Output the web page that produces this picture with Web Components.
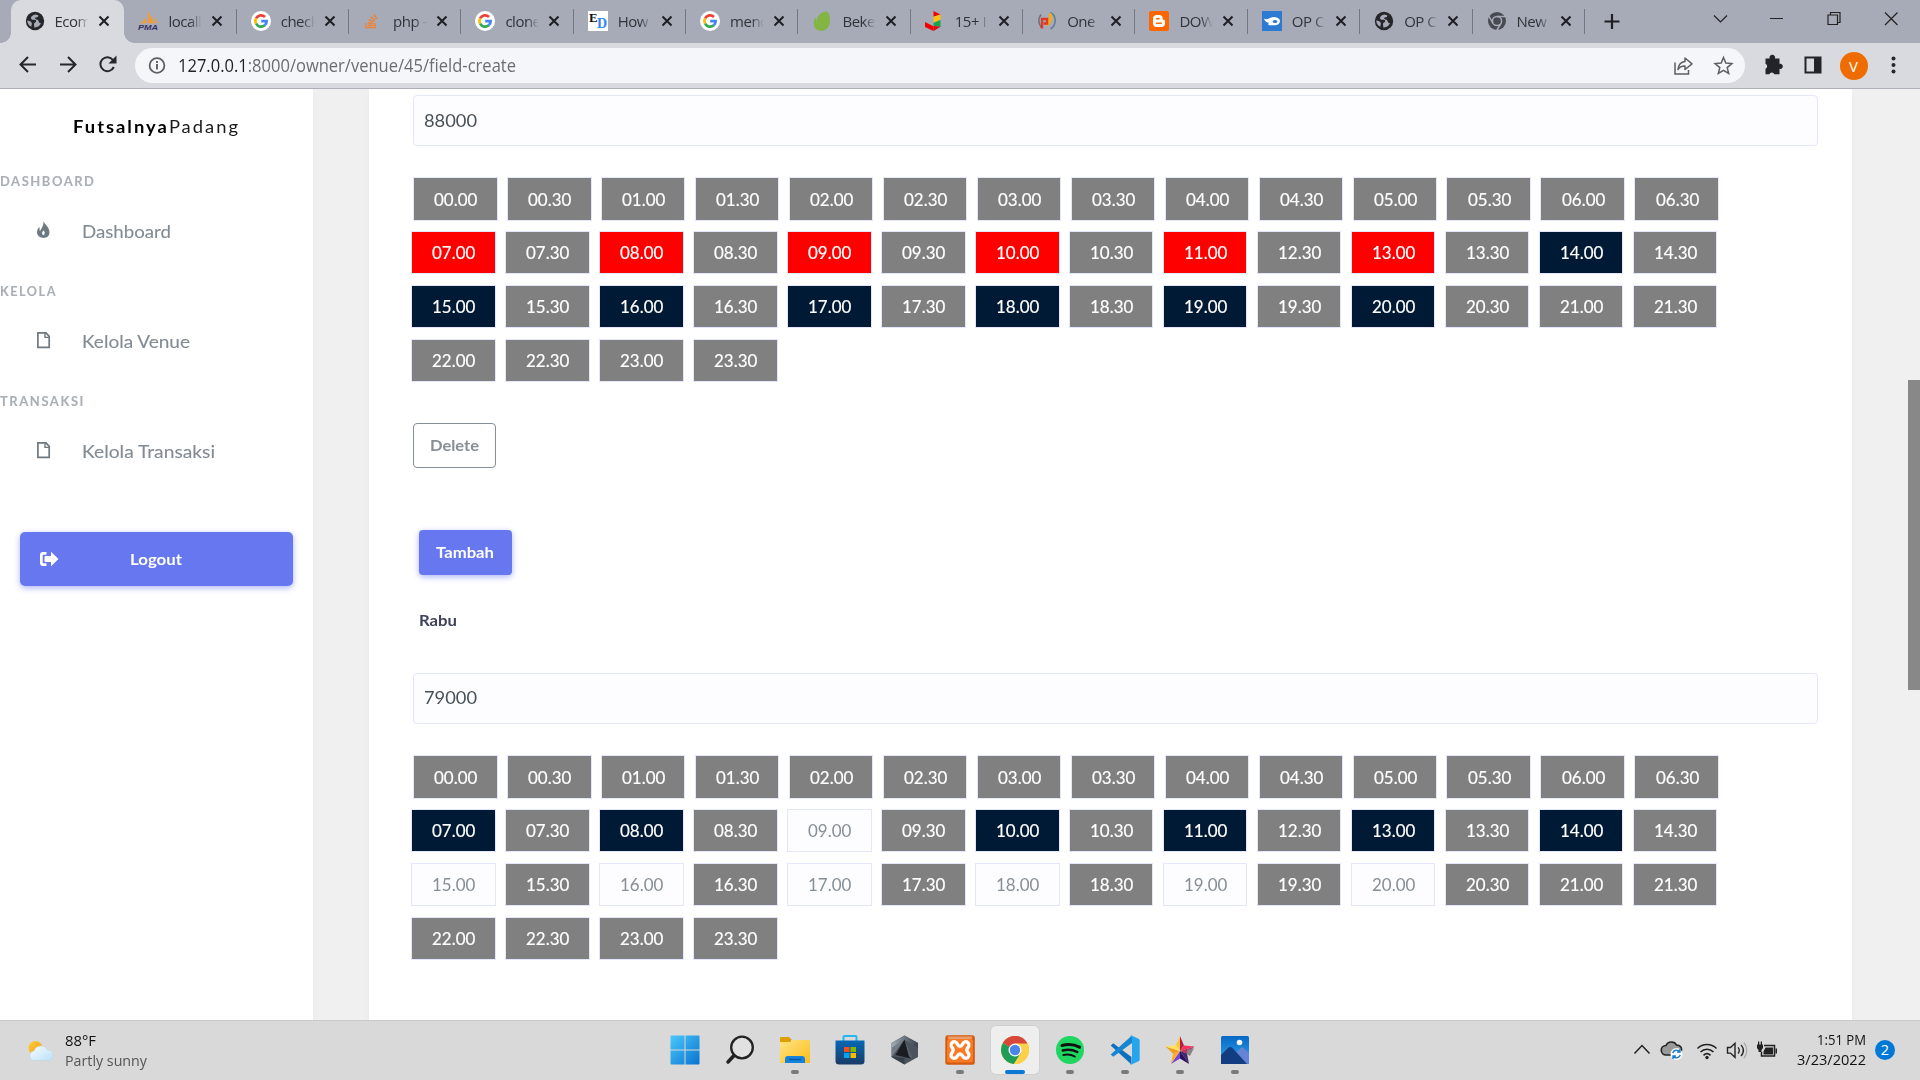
<!DOCTYPE html>
<html lang="id">
<head>
<meta charset="utf-8">
<title>FutsalnyaPadang</title>
<style>
body{margin:0;width:1920px;height:1080px;overflow:hidden;display:flex;flex-direction:column;background:#f0f0f0;font-family:Lato,"Open Sans",sans-serif}
main{flex:1;min-height:0;display:flex;overflow:hidden}
</style>
</head>
<body>
<browser-chrome></browser-chrome>
<main>
  <side-nav></side-nav>
  <schedule-card></schedule-card>
  <page-scrollbar></page-scrollbar>
</main>
<task-bar></task-bar>
<script>
const make=(name,html,after)=>customElements.define(name,class extends HTMLElement{
  connectedCallback(){
    if(this.shadowRoot)return;
    const root=this.attachShadow({mode:'open'});
    root.innerHTML=typeof html==='function'?html(this):html;
    if(after)after(this,root);
  }
});
const svg=(w,h,body,extra='')=>`<svg width="${w}" height="${h}" viewBox="0 0 ${w} ${h}" ${extra}>${body}</svg>`;

const globe=svg(20,20,'<circle cx="10" cy="10" r="9.2" fill="#24262a"/><path d="M10.5 3.600C7.600 4 5.800 5.600 6 7.400c.3 1.300 1.800 1.300 3.400 1.300 1.700 0 2 .9 1.600 2.100-.4 1-1.800.8-2 2-.2 1.400.6 2.300.2 3.600 3.300.3 5.700-1.300 6.900-4.300-1.500.2-2.300-.5-2.500-1.800-.2-1.500-1.900-1.400-3.100-2.200-.9-.7-.2-1.700 1.100-1.800 1.300 0 1.900-.9 1.600-2.100z" fill="#a7abb7"/><path d="M2.200 9.500c2 .3 4.200 1 4.600 2.700.3 1.300-.6 2-.5 3.600-2.500-1.300-4-3.400-4.100-6.300z" fill="#a7abb7"/>');
const google=svg(20,20,'<circle cx="10" cy="10" r="10" fill="#fff"/><g fill="none" stroke-width="2.700"><path d="M5.100 7.300A5.600 5.600 0 0 1 14 6" stroke="#ea4335"/><path d="M5.100 7.300a5.600 5.600 0 0 0 0 5.400" stroke="#fbbc05"/><path d="M5.100 12.700a5.600 5.600 0 0 0 8.700 1.500" stroke="#34a853"/><path d="M10.200 10.200h5.400a5.500 5.500 0 0 1-1.900 4.100" stroke="#4285f4"/></g>');
const fav={
 globe,google,
 pma:svg(20,20,'<path d="M8.200.8C9 5 8 9 2 12.300h6zM9.500 0c1.300 4.500 1.200 8.500.2 12.300h6C14.300 8 12.500 3.800 9.500 0zM15.300 5.400c1.400 2.300 2 4.700 1.700 6.900h2.300c-.5-3-1.700-5.200-4-6.900z" fill="#f79a2e"/><text x="0" y="19" font-family="Liberation Sans" font-size="8" font-weight="bold" font-style="italic" fill="#333264" textLength="20" lengthAdjust="spacingAndGlyphs">PMA</text>'),
 so:svg(20,20,'<g fill="none" stroke="#ef8236" stroke-width="1.500"><path d="M3 12v4.500h9V12M5 14.300h5.200M5 11.800l5.300.8M5.800 8.800l5 2M7.800 5.800l4.200 3.500M11 3.500l2.800 4.700"/></g>'),
 ed:svg(20,20,'<path fill="#fff" d="M0 0h20v20H0z"/><text x="1" y="11" font-family="Liberation Serif" font-size="13" font-weight="bold" fill="#111">E</text><text x="9" y="16.500" font-family="Liberation Serif" font-size="14" font-weight="bold" fill="#2f87f5">D</text>'),
 leaf:svg(20,20,'<path d="M14.800.3c3 2.500 4 8 2.600 13.200-1.200 4-4.300 6.500-8.200 6.300C3.600 19.500.8 15 2.100 9.400c.4-1.800 1.300-2.700 1.900-2.300.5.300-.4 3.500.3 5.900C4 5.500 9 1 14.800.300z" fill="#82b541"/>'),
 blocks:svg(20,20,'<path fill="#f30000" d="M8.500 0l7 3.500-7 2.300zM0 11l8.500 4.200V20L0 16z"/><path fill="#ffc20e" d="M8.500 5.800l7-2.300v5.200l-7 3z"/><path fill="#16a34a" d="M8.500 11.700L15.500 9v7l-7-1z"/><path fill="#e30613" d="M8.500 15l7 .8-7 4.200z"/>'),
 one:svg(20,20,'<path d="M4 3.500c-3 4-2.500 9 .3 13" stroke="#6b7078" stroke-width="1.500" fill="none"/><path d="M13.500 1.500c6 3 6.500 12 0 16.500" stroke="#5c8190" stroke-width="1.600" fill="none"/><path d="M13 2.500c1.500 4 1.200 8.500-4.500 11.500" stroke="#f7a81b" stroke-width="3.200" fill="none"/><path d="M5 17.500V8h5v4.500H6.500" stroke="#df3b24" stroke-width="2.400" fill="none"/>'),
 blogger:svg(20,20,'<rect width="20" height="20" rx="2" fill="#ff6600"/><path d="M4 7.500C4 5.300 5.500 4 7.500 4h2.700c2.200 0 3.500 1.500 3.500 3.500 0 1.200.5 1.300 1.300 1.400.7.100 1 .5 1 1.100v2.500c0 2.200-1.500 3.500-3.500 3.500h-5C5.500 16 4 14.500 4 12.500z" fill="#fff"/><path d="M7.500 7.800h2.600M7.500 12.200h4.800" stroke="#ff6600" stroke-width="1.500" stroke-linecap="round"/>'),
 op:svg(20,20,'<path fill="#2c7ad1" d="M0 0h20v20H0z"/><path d="M2 7.800c2.500 1 4.500.3 6.500-1 3-1.700 7.500-1 9 1.700 1.500 3-.8 5.800-4.500 5.800H8c-2 0-2.200-2-.8-2.600C5 11.700 2.800 10.300 2 7.800z" fill="#fff"/><ellipse cx="13" cy="10.500" rx="2.400" ry="1.500" fill="#2c7ad1"/>'),
 chrome:svg(20,20,'<circle cx="10" cy="10" r="9" fill="#474a50"/><circle cx="10" cy="10" r="4.600" fill="none" stroke="#a7abb7" stroke-width="1.500"/><path d="M10 5.400h8.500M6 12.300L1.800 5M14 12.300L9.700 19.500" stroke="#a7abb7" stroke-width="1.500"/>')
};

make('browser-tab',el=>`<style>
:host{display:block;width:112.350px;height:43px;flex:none;box-sizing:border-box}
.t{display:flex;align-items:center;height:42px;padding:0 0 1px 14px;position:relative}
.i{width:20px;height:20px;margin-right:10px;flex:none}
.x{width:36px;overflow:hidden;white-space:nowrap;font:15px/22px "Open Sans",sans-serif;letter-spacing:-.5px;color:#30333a;margin:-1px 7px 0 0;-webkit-mask:linear-gradient(90deg,#000 60%,transparent 94%)}
.s{position:absolute;right:0;top:9px;width:1px;height:25px;background:#74777f}
svg{display:block}
:host([active]){width:113.900px}
:host([active]) .t{background:#d9dae0;border-radius:10px 10px 0 0}
:host([active]) .t:before,:host([active]) .t:after{content:"";position:absolute;bottom:0;width:10px;height:10px}
:host([active]) .t:before{left:-10px;background:radial-gradient(circle at 0 0,transparent 9.5px,#d9dae0 10px)}
:host([active]) .t:after{right:-10px;background:radial-gradient(circle at 100% 0,transparent 9.5px,#d9dae0 10px)}
:host([active]) .s,:host([nosep]) .s{display:none}
</style><div class="t"><span class="i">${fav[el.getAttribute('icon')]}</span><span class="x"><slot></slot></span>${svg(12,12,'<path d="M1.500 1.500l9 9M10.500 1.500l-9 9" stroke="#1d1f23" stroke-width="2"/>')}<i class="s"></i></div>`);

make('browser-chrome',`<style>
:host{display:block;flex:none;height:89px;background:#d9dae0;box-sizing:border-box;border-bottom:1px solid #aeafb6}
.tabs{display:flex;height:43px;background:#a7abb7;padding-left:10.500px}
.tabs>svg{flex:none}
.bar{display:flex;height:45px;align-items:center}
.nav{width:135px;display:flex}
.omni{width:1609.500px;height:35px;border-radius:18px;background:#f5f6f9;display:flex;align-items:center;box-sizing:border-box}
.omni fit-text{font:17.800px/24px "Open Sans",sans-serif;color:#6a6d72;margin:-1px auto 0 6px}
b{font-weight:400;color:#1f2125}
svg{display:block}
.av{width:28px;height:28px;border-radius:50%;background:#ef6c00;color:#fff;font:15px/28px "Open Sans",sans-serif;text-align:center}
</style>
<div class="tabs">
<browser-tab active icon="globe">Ecom</browser-tab><browser-tab icon="pma">locall</browser-tab><browser-tab icon="google">check</browser-tab><browser-tab icon="so">php -</browser-tab><browser-tab icon="google">clone</browser-tab><browser-tab icon="ed">How</browser-tab><browser-tab icon="google">mend</browser-tab><browser-tab icon="leaf">Beke</browser-tab><browser-tab icon="blocks">15+ I</browser-tab><browser-tab icon="one">One</browser-tab><browser-tab icon="blogger">DOW</browser-tab><browser-tab icon="op">OP C</browser-tab><browser-tab icon="globe">OP C</browser-tab><browser-tab icon="chrome">New</browser-tab>
${svg(330,43,'<path d="M19.500 21.500h15M27 14v15" stroke="#1d1f23" stroke-width="2.200"/><g fill="none" stroke="#222" stroke-width="1.200"><path d="M129 15.500l6.500 6.500 6.500-6.500M185 18.500h13M243 15h9.500v9.500H243zM245.500 15v-2.500h9.500v10h-2.500M300 12.500l12.500 12.500M312.500 12.500L300 25"/></g>')}
</div>
<div class="bar"><div class="nav">${svg(135,45,'<g fill="none" stroke="#25272b" stroke-width="2"><path d="M36 21.500H21M28 14l-7.500 7.500L28 29M60 21.500h15M68 14l7.500 7.500L68 29"/><path d="M113 17a7 7 0 1 0 .8 7"/></g><path d="M116.500 12.500v8h-8z" fill="#25272b"/>')}</div>
<div class="omni">${svg(37,35,'<circle cx="22" cy="17.500" r="7.400" fill="none" stroke="#5c5f64" stroke-width="1.800"/><path d="M22 16v5.500M22 13v2" stroke="#5c5f64" stroke-width="1.900"/>')}
<fit-text w="338"><b>127.0.0.1</b>:8000/owner/venue/45/field-create</fit-text>
${svg(86,35,'<g fill="none" stroke="#5c5f64" stroke-width="1.500"><path d="M16 14.500v11.500h13.500v-4"/><path d="M26 10l7 5.800-7 5.700v-3.500c-3.500-.2-5.300.8-7 3.500.5-4.500 3-7.600 7-8z" stroke-linejoin="round"/><path d="M64.500 9.500l2.300 5.600 6.100.5-4.700 4 1.500 5.900-5.200-3.200-5.200 3.200 1.500-5.900-4.700-4 6.100-.5z"/></g>')}</div>
${svg(95,45,'<path d="M20.500 15.500h4.200a2.800 2.800 0 1 1 5.200 0h4.600v5.300a2.600 2.600 0 1 1 0 5v5.400h-5.200a2.700 2.700 0 0 0-5 0h-3.800v-5.500a2.700 2.700 0 0 0 0-5z" fill="#222429"/><path d="M60.500 14.500h15v15h-15z" fill="none" stroke="#222429" stroke-width="2"/><path d="M69 14h6v16h-6z" fill="#222429"/>')}
<div class="av">V</div>
${svg(50,45,'<g fill="#25272b"><circle cx="25.500" cy="15.500" r="2"/><circle cx="25.500" cy="22" r="2"/><circle cx="25.500" cy="28.500" r="2"/></g>')}
</div>`);

make('nav-group',el=>`<style>
:host{display:block;height:110px}
.h{height:20px;font:700 12.300px/20px Lato,sans-serif;letter-spacing:1.500px;color:#a9afb5}
.r{display:flex;align-items:center;height:60px;margin-top:10px;color:#828b93;font:16.800px/24px Lato,sans-serif}
.i{width:47px;padding-left:35px;margin-right:-.3px;margin-top:-5px}
svg{display:block}
fit-text{-webkit-text-stroke:.1px}
</style><div class="h"><fit-text w="${el.getAttribute('hw')}">${el.getAttribute('head')}</fit-text></div>
<div class="r"><span class="i">${el.getAttribute('icon')==='fire'
 ?svg(17,18,'<path d="M8.500 0C9.600 3.300 14.500 6 14.500 11.300 14.500 15 12 17 8.600 17S2 14.800 2 11.300c0-2.700 1.500-4.700 2.600-5.200 0 2-.3 3.100.4 3.800C6.800 7 8.800 4.300 8.500 0z" fill="#6f7981"/><path d="M8.300 9.500c2 1.200 1.800 3.500.2 4.800-1.800-.8-2-3-.2-4.800z" fill="#fff"/>')
 :svg(17,18,'<path d="M2.900 1.900h8.100l3.200 3.400v11H2.900z" fill="none" stroke="#6f7981" stroke-width="1.700"/><path d="M10 2v4.400h4.400" fill="none" stroke="#6f7981" stroke-width="1.400"/>')}</span><fit-text w="${el.getAttribute('w')}"><slot></slot></fit-text></div>`);

make('side-nav',`<style>
:host{display:block;width:313px;flex:none;background:#fff;box-shadow:0 4px 8px rgba(0,0,0,.03);position:relative}
.brand{height:74px;padding-left:72.500px;font:16.500px/76px Lato,sans-serif;letter-spacing:1.800px;color:#191919;box-sizing:border-box;margin-bottom:9px}
.brand b{font-weight:700;color:#000}
.out{margin:30px 20px 0;height:54px;border-radius:5px;background:#6777ef;box-shadow:0 2px 6px #acb5f6;color:#fff;display:flex;align-items:center;font:700 14.500px/24px Lato,sans-serif}
.out svg{margin:0 71px 0 19px}
.out fit-text{padding-top:1px}
</style><div class="brand"><fit-text w="167">
<b>Futsalnya</b>Padang</fit-text></div>
<nav-group head="DASHBOARD" hw="95.500" icon="fire" w="89">Dashboard</nav-group>
<nav-group head="KELOLA" hw="57" icon="file" w="108">Kelola Venue</nav-group>
<nav-group head="TRANSAKSI" hw="85" icon="file" w="133">Kelola Transaksi</nav-group>
<div class="out">${svg(20,16,'<path d="M7.500 1H4a3 3 0 0 0-3 3v8a3 3 0 0 0 3 3h3.500v-2.700H4.500a.8.8 0 0 1-.8-.8v-7a.8.8 0 0 1 .8-.8h3z" fill="#fff"/><path d="M12 .8L19.500 8 12 15.200V11H6.500a1 1 0 0 1-1-1V6a1 1 0 0 1 1-1H12z" fill="#fff"/>')}<fit-text w="52">Logout</fit-text></div>`);

make('time-slot',`<style>
:host{display:flex;box-sizing:border-box;width:84.600px;height:43.400px;border:1px solid #e4e6fc;background:gray;color:#fff;align-items:center;justify-content:center;font:16.300px/24px Lato,sans-serif;padding:1.500px 0 0 1px}
:host([kind=booked]){background:red}
:host([kind=on]){background:#001a35}
:host([kind=free]){background:#fdfdff;color:#868e96}
fit-text{-webkit-text-stroke:.15px}
:host([kind=free]) fit-text{-webkit-text-stroke:0}
</style><fit-text w="43.300"><slot></slot></fit-text>`);

make('time-grid',`<style>
:host{display:flex;flex-direction:column;gap:10.400px;height:205px}
.r{display:flex;gap:9.370px}
.r:first-of-type{margin-left:1.800px}
</style>`,(el,root)=>{
  const hours=[...Array(24).keys()].flatMap(h=>{const p=String(h).padStart(2,'0');return [p+'.00',p+'.30'];}).filter(t=>!['11.30','12.00'].includes(t));
  const pick=a=>(el.getAttribute(a)||'').split(' ');
  const booked=pick('booked'),on=pick('on'),free=pick('free');
  for(let i=0;i<hours.length;i+=14){
    const r=document.createElement('div');r.className='r';
    hours.slice(i,i+14).forEach(t=>{
      const s=document.createElement('time-slot'),k=t.slice(0,2);
      s.textContent=t;
      if(t.endsWith('.00'))s.setAttribute('kind',booked.includes(k)?'booked':on.includes(k)?'on':free.includes(k)?'free':'closed');
      r.append(s);
    });
    root.append(r);
  }
});

make('price-field',`<style>
:host{display:flex;align-items:center;box-sizing:border-box;width:1405px;height:51px;margin-left:2px;border:1px solid #e4e6fc;border-radius:4px;background:#fdfdff;padding:0 10px;color:#495057;font:17px/24px Lato,sans-serif}
</style><fit-text w="53"><slot></slot></fit-text>`);

make('app-button',el=>`<style>
:host{display:flex;box-sizing:border-box;height:45px;border-radius:4px;align-items:center;justify-content:center;font:700 14.500px/24px Lato,sans-serif;padding-top:1px}
:host([kind=outline]){width:83px;border:1px solid #868e96;color:#868e96}
:host([kind=primary]){width:93px;background:#6777ef;color:#fff;box-shadow:0 2px 6px #acb5f6}
</style><fit-text w="${el.getAttribute('w')}"><slot></slot></fit-text>`);

make('schedule-card',`<style>
:host{display:block;box-sizing:border-box;width:1483px;margin-left:56px;flex:none;background:#fff;padding:6px 0 0 42.200px;box-shadow:0 4px 8px rgba(0,0,0,.03)}
time-grid{margin-top:31.200px}
.d{margin:40.800px 0 0 1.800px}
.t{margin:62px 0 0 7.800px}
.day{margin:33px 0 41px 7.500px;height:24px;font:700 14.600px/25px Lato,sans-serif;color:#3f4358}
</style>
<price-field>88000</price-field>
<time-grid booked="07 08 09 10 11 13" on="14 15 16 17 18 19 20"></time-grid>
<app-button class="d" kind="outline" w="49">Delete</app-button>
<app-button class="t" kind="primary" w="58">Tambah</app-button>
<div class="day"><fit-text w="38">Rabu</fit-text></div>
<price-field>79000</price-field>
<time-grid on="07 08 10 11 13 14" free="09 15 16 17 18 19 20"></time-grid>`);

make('page-scrollbar',`<style>:host{display:block;width:12px;margin-left:auto;padding-top:291px}i{display:block;height:310px;background:#888}</style><i></i>`);

const app={
 win:svg(30,30,'<defs><linearGradient id="a" x2="1" y2="1"><stop stop-color="#4cc8fb"/><stop offset="1" stop-color="#0873d0"/></linearGradient></defs><path d="M1.500.5H14.500V14.500H.5V1.500a1 1 0 0 1 1-1zM15.500.5h13a1 1 0 0 1 1 1v13h-14zM.5 15.500h14v14h-13a1 1 0 0 1-1-1zM15.500 15.500h14v13a1 1 0 0 1-1 1h-13z" fill="url(#a)"/>'),
 search:svg(30,30,'<circle cx="17" cy="12.500" r="10.800" fill="#e9e9e9" fill-opacity=".5" stroke="#222" stroke-width="2.300"/><path d="M9 20.500L3 27" stroke="#222" stroke-width="3.500" stroke-linecap="round"/>'),
 folder:svg(30,30,'<defs><linearGradient id="a" x2="1" y2="1"><stop stop-color="#ffe484"/><stop offset="1" stop-color="#fcbd19"/></linearGradient></defs><path d="M0 3a1 1 0 0 1 1-1h8l3 3h-1v4H0z" fill="#dda000"/><path d="M0 7h10l3-2h16a1 1 0 0 1 1 1v22H0z" fill="url(#a)"/><path d="M5 28v-4a3 3 0 0 1 3-3h14a3 3 0 0 1 3 3v4z" fill="#1583dc"/><path d="M9 24.500h12" stroke="#075ba6" stroke-width="1.500"/>'),
 store:svg(30,30,'<defs><linearGradient id="a" x2="0" y2="1"><stop stop-color="#0868b5"/><stop offset="1" stop-color="#193b67"/></linearGradient></defs><path d="M8.500 7V2a1 1 0 0 1 1-1h11a1 1 0 0 1 1 1v5" fill="none" stroke="#25b7ed" stroke-width="2"/><path d="M.5 5.500h29V26a3.500 3.500 0 0 1-3.500 3.500H4A3.500 3.500 0 0 1 .5 26z" fill="url(#a)"/><path fill="#f25022" d="M9 12h5.500v5H9z"/><path fill="#7fba00" d="M15.500 12H21v5h-5.500z"/><path fill="#00a4ef" d="M9 18h5.500v5H9z"/><path fill="#ffb900" d="M15.500 18H21v5h-5.500z"/>'),
 crate:svg(30,30,'<defs><linearGradient id="a" x2="1" y2="0"><stop stop-color="#a3abb3"/><stop offset=".5" stop-color="#6b747d"/><stop offset="1" stop-color="#3a424b"/></linearGradient></defs><path d="M14.500.5L28 8v14l-13.500 7.500L1.500 22V8z" fill="#4b545d"/><path d="M14.500.5L28 8v5L14.500 5 1.500 15V8z" fill="url(#a)"/><path d="M14.500 4.500L2 21.500v-9z" fill="#737d87"/><path d="M14.500 4.500L5.500 20l15 3.500z" fill="#191d22"/><path d="M14.500 4.500l8 18-3.500-.8z" fill="#59636d"/><path d="M1.500 21.500L14.500 23v6.500L1.500 22z" fill="#363e47"/>'),
 xampp:svg(30,30,'<rect x=".3" y=".3" width="29.500" height="29.500" rx="2.500" fill="#d45b12"/><rect x="2" y="4" width="26" height="23.500" rx="2" fill="#fb7a24"/><path d="M2.500 1.500h25l-1 2.500h-23z" fill="#e9a06e"/><path d="M10.500 7c-2.500-.8-5 1-4.300 3.700.5 2 2 2.500 2 4.300s-1.500 2.300-2 4.300c-.7 2.700 1.800 4.500 4.300 3.700 2.200-.8 2-4 4.500-4s2.300 3.200 4.500 4c2.500.8 5-1 4.300-3.700-.5-2-2-2.500-2-4.300s1.500-2.300 2-4.300C24.500 8 22 6.200 19.500 7c-2.200.8-2 4.500-4.500 4.500S12.700 7.800 10.500 7z" fill="none" stroke="#fff" stroke-width="3.400"/>'),
 chrome:svg(30,30,'<circle cx="15" cy="15" r="14" fill="#fcc934"/><path d="M15 15L2.900 8A14 14 0 0 1 27.100 8H15z" fill="#d9463a"/><path d="M15 15L2.900 8a14 14 0 0 0 11 21l7-11z" fill="#1f9d58"/><path d="M15 8.500h12.400A14 14 0 0 1 14 29l7-11z" fill="#fdd04a"/><path d="M2.900 8A14 14 0 0 1 27.400 8.600H15z" fill="#d9463a"/><circle cx="15" cy="15" r="6.500" fill="#fff"/><circle cx="15" cy="15" r="5.200" fill="#4b84ed"/>'),
 spotify:svg(30,30,'<circle cx="15" cy="15" r="14" fill="#1fd660"/><g fill="none" stroke="#111" stroke-linecap="round"><path d="M7 10.500c6-1.600 12-1.200 17.500 1.700" stroke-width="3"/><path d="M7.800 15.500c5-1.300 10-.8 14.500 1.500" stroke-width="2.500"/><path d="M8.300 20c4-1 8-.6 11.500 1.500" stroke-width="2"/></g>'),
 code:svg(30,30,'<path d="M.7 10.500l2.500-2.200L21.500 22v7.500z" fill="#0b70bd"/><path d="M.7 19.500l2.500 2.200L22 8V.5z" fill="#1486d2"/><path d="M21.500.5l7 3.300a2 2 0 0 1 1.200 1.800v18.800a2 2 0 0 1-1.200 1.800l-7 3.300a2 2 0 0 1-1.500-.6l2-1.400V2.500L20 1z" fill="#26a5ee"/>'),
 star:svg(30,30,'<path d="M15 1v15L11 10z" fill="#ffc83a"/><path d="M15 1l4 9.500L15 16z" fill="#b81b45"/><path d="M19 10.500l10.500 1L15 16z" fill="#f5315f"/><path d="M29.500 11.500L22 18.500 15 16z" fill="#bb3558"/><path d="M22 18.500l2 10.500-9-13z" fill="#412a6c"/><path d="M15 16l9 13-9-5.500z" fill="#29115a"/><path d="M15 16v7.500L6 29z" fill="#7341dd"/><path d="M15 16L6 29l2-10.500z" fill="#ffad24"/><path d="M15 16l-7 2.500L.5 11.500z" fill="#f29b1c"/><path d="M.5 11.500L11 10l4 6z" fill="#ffe15c"/><path d="M22 15l7-2-4 8-3-2z" fill="#8c8186"/>'),
 photo:svg(30,30,'<defs><linearGradient id="a" x2="0" y2="1"><stop stop-color="#0868c4"/><stop offset="1" stop-color="#2fa8f0"/></linearGradient></defs><rect x="1" y="1" width="28" height="28" rx="1.500" fill="url(#a)"/><path d="M14 19l8-7 7 6v11H14z" fill="#6684d6"/><path d="M1 20l7-7c1.500-1.400 3-1.400 4.500 0L27 29H1z" fill="#123d80"/><circle cx="19.500" cy="7.500" r="2.800" fill="#f4f6fa"/>')
};
make('task-icon',el=>`<style>
:host{display:flex;flex-direction:column;align-items:center;width:48px;height:48px;border-radius:5px;box-sizing:border-box;padding-top:9px}
:host([active]){background:#eeeeef;box-shadow:0 0 0 1px #d0d0d0}
svg{display:block}
i{display:block;width:8px;height:4px;border-radius:2px;margin-top:5px}
:host([open]) i{background:#7a7a7a}
:host([active]) i{width:20px;background:#0b78d6}
</style>${app[el.getAttribute('app')]}<i></i>`);

make('task-bar',`<style>
:host{display:flex;flex:none;height:60px;box-sizing:border-box;border-top:1px solid #c8cac9;background:#d9d9d9;font:14.600px/20px "Open Sans",sans-serif;color:#111}
svg{display:block}
.w{display:flex;width:661px;padding:9px 0 0 26px;box-sizing:border-box}
.w>div{display:flex;flex-direction:column;margin-left:8px}
.w .p{color:#555}
.apps{display:flex;gap:7px;padding-top:5px}
.apps task-icon{margin-top:0}
.tray{margin-left:auto;display:flex}
.tm{display:flex;flex-direction:column;align-items:flex-end;padding-top:8px;width:70px}
.n{width:20px;height:20px;margin:19px 25px 0 9px;border-radius:50%;background:#0078d7;color:#fff;text-align:center;font-size:14.500px;line-height:19px}
</style>
<div class="w">${svg(31,34,'<defs><linearGradient id="s" x2="1" y2="1"><stop stop-color="#ffcf35"/><stop offset="1" stop-color="#f79a1c"/></linearGradient><linearGradient id="c" x2="1" y2="1"><stop stop-color="#f7fcff"/><stop offset="1" stop-color="#b9e1f7"/></linearGradient></defs><circle cx="9.500" cy="18" r="7" fill="url(#s)"/><path d="M8 30.500a4.800 4.800 0 0 1 0-9.500 7.300 7.300 0 0 1 13.500-1 5.400 5.400 0 0 1 2 10.500z" fill="url(#c)" stroke="#bdd0da" stroke-width=".5"/>')}
<div><fit-text w="31">88°F</fit-text><fit-text class="p" w="82">Partly sunny</fit-text></div></div>
<div class="apps"><task-icon app="win"></task-icon><task-icon app="search"></task-icon><task-icon app="folder" open></task-icon><task-icon app="store"></task-icon><task-icon app="crate"></task-icon><task-icon app="xampp" open></task-icon><task-icon app="chrome" active></task-icon><task-icon app="spotify" open></task-icon><task-icon app="code" open></task-icon><task-icon app="star" open></task-icon><task-icon app="photo" open></task-icon></div>
<div class="tray">${svg(166,59,'<g transform="translate(0 -1)"><path d="M4.500 33.500L12 25.500l7.500 8" fill="none" stroke="#222" stroke-width="1.500"/><path d="M36 35a4.700 4.700 0 0 1 0-9.500c2-4.500 8.500-4.500 10.500-.5 4 .2 5.500 2.700 5 5.500L46 35z" fill="#999" stroke="#222" stroke-width="1.600"/><circle cx="46.500" cy="34" r="6" fill="#fff"/><path d="M42.700 33a4 4 0 0 1 7-1.300M50.300 35a4 4 0 0 1-7 1.300M50 29v3h-3M43 39v-3h3" fill="none" stroke="#1379d4" stroke-width="1.400"/><g fill="none" stroke="#222" stroke-width="1.600"><path d="M67.500 28.500c5.400-5.300 13.600-5.300 19 0M70.500 32c3.800-3.700 9.200-3.700 13 0M73.500 35.300c2.200-2 4.800-2 7 0"/><path d="M97.500 27.500h3l4.500-4.200v14l-4.500-4.200h-3z" stroke-width="1.400"/><path d="M108 27.300c1.700 2 1.700 4.200 0 6.200M111 24.800c3 3.500 3 7.700 0 11.200" stroke-width="1.300"/><path d="M113.800 22.500c4 4.800 4 11 0 15.800" stroke="#aaa" stroke-width="1.200"/></g><circle cx="77" cy="37.500" r="1.700" fill="#222"/><path d="M134 25.500h10.500v10.500h-13v-4" fill="none" stroke="#222" stroke-width="1.500"/><path d="M135.500 27.500h7.500v7h-9.500v-3zM145.500 28.500h1.500v5h-1.500zM127 24.500h6v3.500l-1.500 2v2h-3v-2l-1.500-2zM128 21.500h1.300V25H128zM130.700 21.500h1.300V25h-1.300z" fill="#222"/></g>')}
<div class="tm"><fit-text w="49">1:51 PM</fit-text><fit-text w="69">3/23/2022</fit-text></div><div class="n">2</div></div>`);

/* Text run condensed or widened horizontally to a given width. */
make('fit-text','<style>:host{display:block;white-space:nowrap;flex:none}span{display:inline-block;transform-origin:0 50%}</style><span><slot></slot></span>',(el,root)=>{
  const s=root.querySelector('span'),w=+el.getAttribute('w'),n=s.getBoundingClientRect().width;
  el.style.width=w+'px';
  if(n)s.style.transform=`scaleX(${w/n})`;
});
</script>
</body>
</html>
